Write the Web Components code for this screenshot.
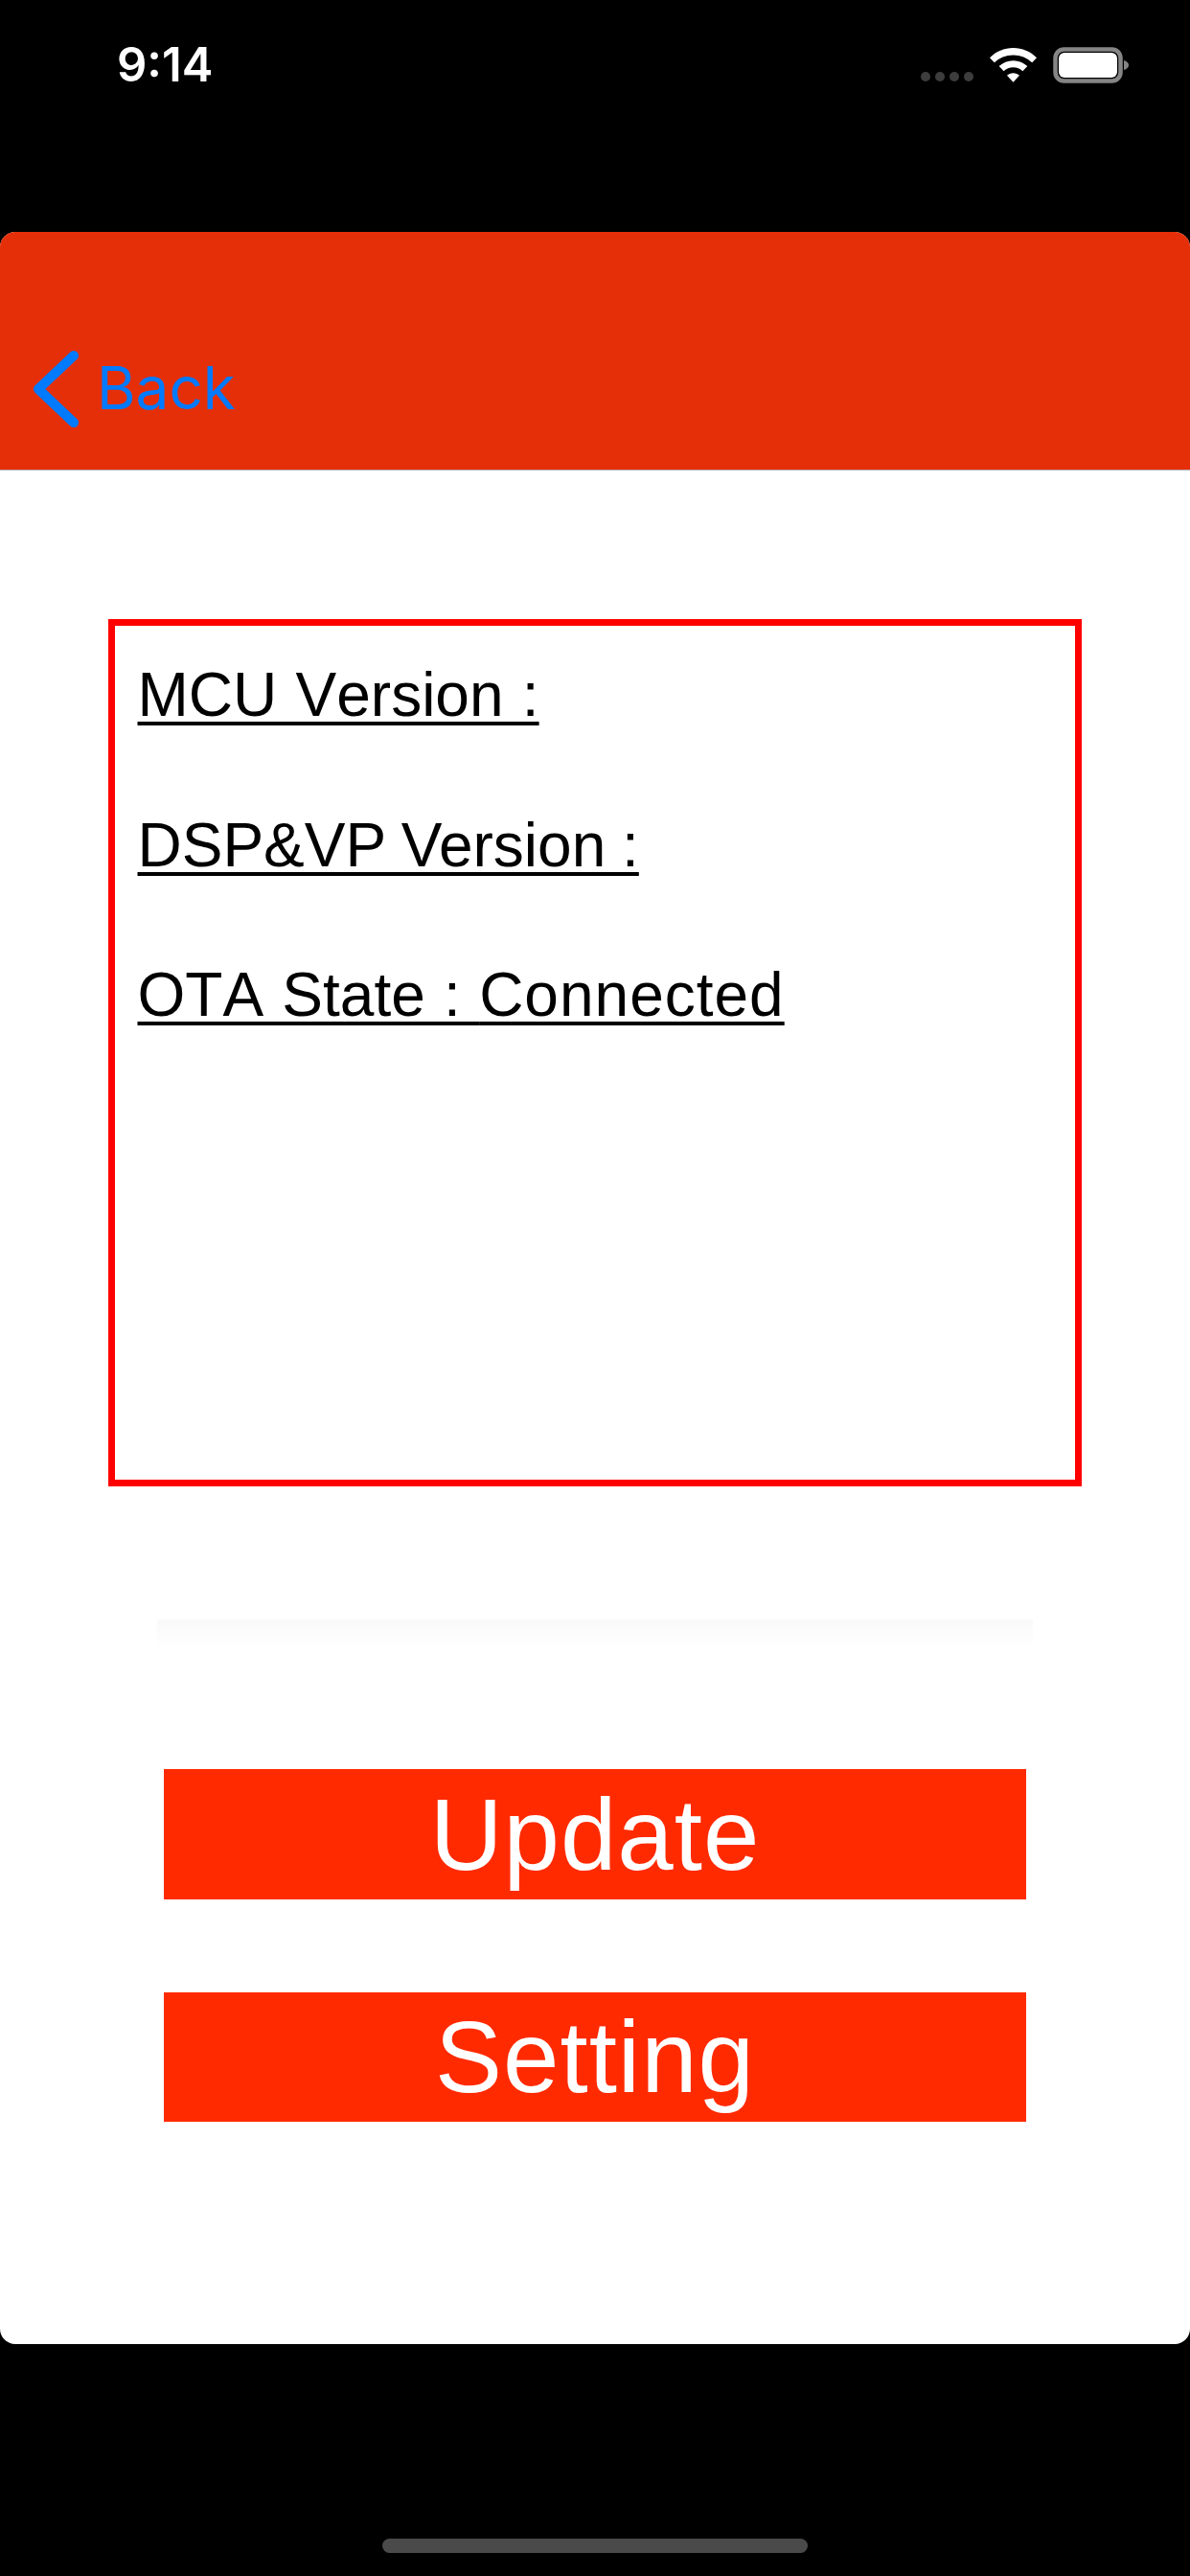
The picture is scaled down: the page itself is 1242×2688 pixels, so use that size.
<!DOCTYPE html>
<html>
<head>
<meta charset="utf-8">
<title>OTA</title>
<style>
  html, body { margin: 0; background: #000; }
  body { width: 1242px; height: 2688px; overflow: hidden; display: flex; flex-direction: column; font-family: "Liberation Sans", Arial, sans-serif; }
</style>
</head>
<body>
<status-bar time="9:14"></status-bar>
<app-card>
  <nav-header label="Back"></nav-header>
  <info-box>
    <info-row>MCU Version :</info-row>
    <info-row style="font-kerning:normal;word-spacing:-1px">DSP&amp;VP Version :</info-row>
    <info-row>OTA State : <span style="letter-spacing:1px">Connected</span></info-row>
  </info-box>
  <ota-progress></ota-progress>
  <red-button style="margin-top:125px;height:136px">Update</red-button>
  <red-button style="margin-top:97px;height:135px">Setting</red-button>
</app-card>
<home-bar></home-bar>

<script>
class StatusBar extends HTMLElement {
    constructor() {
        super();
        this.attachShadow({ mode: 'open' });
        this.shadowRoot.innerHTML = `
        <style>
        :host { display: flex; height: 242px; box-sizing: border-box; padding: 49px 63px 0 122px; justify-content: space-between; align-items: flex-start; color: #fff; }
        .time { font: 600 49px/37px Inter, "Liberation Sans", sans-serif; }
        .icons { display: flex; align-items: flex-start; }
        .dots { display: flex; gap: 5px; margin: 26px 17px 0 0; }
        .dots i { width: 10px; height: 10px; border-radius: 5px; background: #3d3d3d; }
        svg { display: block; }
        .wifi { margin: 1px 17px 0 0; }
        </style>
        <div class="time"></div>
        <div class="icons">
            <div class="dots"><i></i><i></i><i></i><i></i></div>
            <svg class="wifi" width="49" height="36" viewBox="0 0 49 36" fill="#fff">
                <path d="M24.5 0C15 0 6.6 3.7 0 10.2l4.8 5.1C10 10.4 16.9 7.4 24.5 7.4s14.500 3 19.700 7.900L49 10.200C42.400 3.700 34 0 24.500 0z"/>
                <path d="M24.500 13.200c-5.700 0-10.800 2.200-14.800 5.900l4.900 5.100c2.700-2.400 6.100-3.900 9.900-3.900s7.200 1.500 9.900 3.900l4.900-5.100c-4-3.700-9.100-5.900-14.800-5.900z"/>
                <path d="M24.500 26.300c-2.500 0-4.800 1-6.500 2.500l6.500 7 6.500-7c-1.700-1.500-4-2.500-6.500-2.500z"/>
            </svg>
            <svg width="80" height="38" viewBox="0 0 80 38">
                <rect x="2.500" y="2.500" width="68" height="33" rx="9" fill="none" stroke="#858585" stroke-width="4.500"/>
                <rect x="6" y="6" width="61" height="26" rx="6" fill="#fff"/>
                <path d="M74 14c3 .8 5 2.600 5 5s-2 4.200-5 5z" fill="#858585"/>
            </svg>
        </div>
        `;
    }

    connectedCallback() {
        this.shadowRoot.querySelector('.time').textContent = this.getAttribute('time');
    }
}

class AppCard extends HTMLElement {
    constructor() {
        super();
        this.attachShadow({ mode: 'open' });
        this.shadowRoot.innerHTML = `
        <style>
        :host { display: flex; flex-direction: column; height: 2204px; background: #fff; border-radius: 16px; overflow: hidden; }
        </style>
        <slot></slot>
        `;
    }
}

class NavHeader extends HTMLElement {
    constructor() {
        super();
        this.attachShadow({ mode: 'open' });
        this.shadowRoot.innerHTML = `
        <style>
        :host { display: flex; flex: none; height: 249px; box-sizing: border-box; background: #e52f08; border-bottom: 1px solid #b3b3b3; align-items: flex-start; padding: 124px 0 0 30px; color: #007aff; }
        svg { display: block; flex: none; }
        span { font: 400 62px/78px Inter, "Liberation Sans", sans-serif; margin: 0 0 0 14px; }
        </style>
        <svg width="57" height="90" viewBox="0 0 57 90" fill="none" stroke="#007aff" stroke-width="10" stroke-linecap="round" stroke-linejoin="round">
            <path d="M47 5 L10 40 L47 75"/>
        </svg>
        <span></span>
        `;
    }

    connectedCallback() {
        this.shadowRoot.querySelector('span').textContent = this.getAttribute('label');
    }
}

class InfoBox extends HTMLElement {
    constructor() {
        super();
        this.attachShadow({ mode: 'open' });
        this.shadowRoot.innerHTML = `
        <style>
        :host { display: flex; flex: none; flex-direction: column; gap: 84.500px; box-sizing: border-box; width: 1016px; height: 905px; margin: 155px 0 0 113px; border: 7.500px solid #ff0000; padding: 36px 0 0 23.500px; color: #000; }
        </style>
        <slot></slot>
        `;
    }
}

class InfoRow extends HTMLElement {
    constructor() {
        super();
        this.attachShadow({ mode: 'open' });
        this.shadowRoot.innerHTML = `
        <style>
        :host { display: block; font: 400 64px/72px "Liberation Sans", Arial, sans-serif; font-kerning: none; word-spacing: 1.500px; text-decoration: underline; text-decoration-thickness: 4px; text-underline-offset: 6px; }
        </style>
        <slot></slot>
        `;
    }
}

class OtaProgress extends HTMLElement {
    constructor() {
        super();
        this.attachShadow({ mode: 'open' });
        this.shadowRoot.innerHTML = `
        <style>
        :host { display: block; flex: none; width: 914px; height: 31px; margin: 139px 0 0 164px; background: linear-gradient(#f9f9f9, #ffffff); }
        </style>
        `;
    }
}

class RedButton extends HTMLElement {
    constructor() {
        super();
        this.attachShadow({ mode: 'open' });
        this.shadowRoot.innerHTML = `
        <style>
        :host { display: flex; flex: none; width: 900px; margin-left: 171px; align-items: center; justify-content: center; background: #ff2a00; color: #fff; font: 400 105px/1 "Liberation Sans", Arial, sans-serif; letter-spacing: 1px; }
        </style>
        <slot></slot>
        `;
    }
}

class HomeBar extends HTMLElement {
    constructor() {
        super();
        this.attachShadow({ mode: 'open' });
        this.shadowRoot.innerHTML = `
        <style>
        :host { display: flex; justify-content: center; padding-top: 203px; }
        div { width: 444px; height: 15px; border-radius: 8px; background: #4a4a4a; }
        </style>
        <div></div>
        `;
    }
}

customElements.define('status-bar', StatusBar);
customElements.define('app-card', AppCard);
customElements.define('nav-header', NavHeader);
customElements.define('info-box', InfoBox);
customElements.define('info-row', InfoRow);
customElements.define('ota-progress', OtaProgress);
customElements.define('red-button', RedButton);
customElements.define('home-bar', HomeBar);
</script>
</body>
</html>
